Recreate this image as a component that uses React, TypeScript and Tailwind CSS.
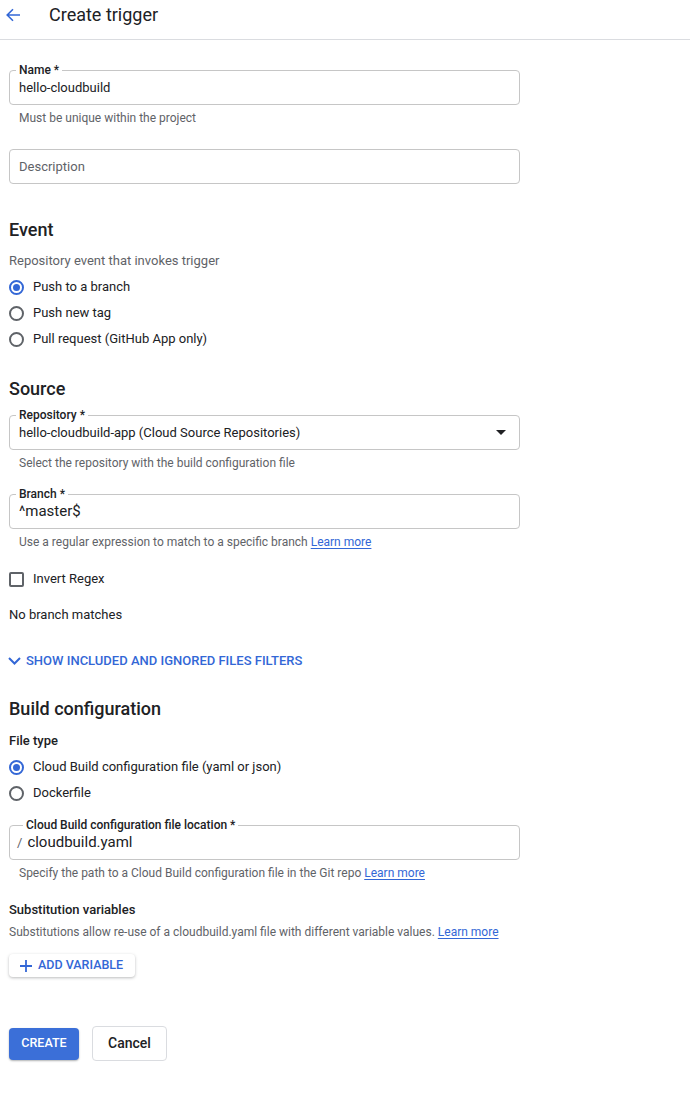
import { ReactNode } from "react";

const blue = "text-[#3367d6]";

function Field({
    label,
    children,
    right,
    labelLeft = "left-[6px]",
    padLeft = "pl-[9px]",
}: {
    label?: string;
    children: ReactNode;
    right?: ReactNode;
    labelLeft?: string;
    padLeft?: string;
}) {
    return (
        <div className={"relative w-[511px] h-[35px] border border-[#c6c6c6] rounded-[4px] flex items-center pr-[12px] " + padLeft}>
            {label && (
                <span className={"absolute top-[-8px] px-[3px] bg-white text-[12px] leading-[14px] font-medium text-[#202124] " + labelLeft}>
                    {label}
                </span>
            )}
            <div className="flex-1 flex items-center">{children}</div>
            {right}
        </div>
    );
}

function Helper({ children }: { children: ReactNode }) {
    return <p className="pl-[10px] mt-[5px] text-[12px] leading-[16px] text-[#5f6368]">{children}</p>;
}

function LearnMore() {
    return <a href="#" className="text-[#3367d6] underline underline-offset-2">Learn more</a>;
}

function Radio({ checked, label }: { checked?: boolean; label: string }) {
    return (
        <div className="h-[26px] flex items-center">
            <span
                className={
                    checked
                        ? "w-[15px] h-[15px] rounded-full border-2 border-[#3367d6] flex items-center justify-center"
                        : "w-[15px] h-[15px] rounded-full border-2 border-[#5f6368]"
                }
            >
                {checked && <span className="w-[7px] h-[7px] rounded-full bg-[#3367d6]" />}
            </span>
            <span className="ml-[9px] text-[13px] text-[#202124]">{label}</span>
        </div>
    );
}

function Heading({ children, className = "" }: { children: ReactNode; className?: string }) {
    return <h2 className={"text-[18px] leading-[24px] font-medium text-[#202124] " + className}>{children}</h2>;
}

export default function App() {
    return (
        <div className="w-[690px] min-h-[1110px] bg-white font-['Roboto',sans-serif] text-[#202124]">
            <header className="h-[40px] border-b border-[#dadce0] flex items-center">
                <svg className="ml-[5px] mt-[-9px]" width="16" height="16" viewBox="0 0 16 16">
                    <path d="M15 8H2.5M8 2.2L2.2 8L8 13.8" fill="none" stroke="#3367d6" strokeWidth="1.6" />
                </svg>
                <h1 className="ml-[28px] mt-[-9px] text-[18px] leading-[24px] text-[#202124]">Create trigger</h1>
            </header>

            <main className="pl-[9px]">
                <div className="pt-[30px]">
                    <Field label="Name *">
                        <span className="text-[13px]">hello-cloudbuild</span>
                    </Field>
                    <Helper>Must be unique within the project</Helper>
                </div>

                <div className="mt-[23px]">
                    <Field>
                        <span className="text-[13px] text-[#5f6368]">Description</span>
                    </Field>
                </div>

                <Heading className="mt-[34px]">Event</Heading>
                <p className="mt-[11px] text-[13px] leading-[16px] text-[#5f6368]">Repository event that invokes trigger</p>
                <div className="mt-[5px]">
                    <Radio checked label="Push to a branch" />
                    <Radio label="Push new tag" />
                    <Radio label="Pull request (GitHub App only)" />
                </div>

                <Heading className="mt-[25px]">Source</Heading>
                <div className="mt-[14px]">
                    <Field
                        label="Repository *"
                        right={
                            <svg width="10" height="5" viewBox="0 0 10 5" className="mr-[1px]">
                                <path d="M0 0h10L5 5z" fill="#202124" />
                            </svg>
                        }
                    >
                        <span className="text-[13px]">hello-cloudbuild-app (Cloud Source Repositories)</span>
                    </Field>
                    <Helper>Select the repository with the build configuration file</Helper>
                </div>

                <div className="mt-[23px]">
                    <Field label="Branch *">
                        <span className="text-[15px]">^master$</span>
                    </Field>
                    <Helper>
                        Use a regular expression to match to a specific branch <LearnMore />
                    </Helper>
                </div>

                <div className="mt-[16px] h-[26px] flex items-center">
                    <span className="w-[15px] h-[15px] rounded-[2px] border-2 border-[#5f6368]" />
                    <span className="ml-[9px] text-[13px]">Invert Regex</span>
                </div>

                <p className="mt-[15px] text-[13px] leading-[16px]">No branch matches</p>

                <button className={"mt-[30px] flex items-center text-[13px] leading-[16px] font-medium " + blue}>
                    <svg width="13" height="8" viewBox="0 0 13 8" className="mr-[5px] ml-[-1px]">
                        <path d="M1 1l5.5 5.5L12 1" fill="none" stroke="#3367d6" strokeWidth="2" />
                    </svg>
                    SHOW INCLUDED AND IGNORED FILES FILTERS
                </button>

                <Heading className="mt-[28px]">Build configuration</Heading>
                <p className="mt-[12px] text-[13px] leading-[16px] font-medium">File type</p>
                <div className="mt-[5px]">
                    <Radio checked label="Cloud Build configuration file (yaml or json)" />
                    <Radio label="Dockerfile" />
                </div>

                <div className="mt-[19px]">
                    <Field label="Cloud Build configuration file location *" labelLeft="left-[13px]" padLeft="pl-[7px]">
                        <span className="text-[13px] text-[#5f6368] mr-[5px]">/</span>
                        <span className="text-[15px]">cloudbuild.yaml</span>
                    </Field>
                    <Helper>
                        Specify the path to a Cloud Build configuration file in the Git repo <LearnMore />
                    </Helper>
                </div>

                <p className="mt-[21px] text-[13px] leading-[16px] font-medium">Substitution variables</p>
                <p className="mt-[6px] text-[12px] leading-[16px] text-[#5f6368]">
                    Substitutions allow re-use of a cloudbuild.yaml file with different variable values. <LearnMore />
                </p>

                <button
                    className={
                        "mt-[14px] h-[23px] pl-[11px] pr-[12px] flex items-center rounded-[4px] bg-white shadow-[0_1px_3px_rgba(60,64,67,0.35)] text-[12.5px] font-medium " +
                        blue
                    }
                >
                    <svg width="12" height="12" viewBox="0 0 12 12" className="mr-[6px]">
                        <path d="M6 0v12M0 6h12" stroke="#3367d6" strokeWidth="1.8" />
                    </svg>
                    ADD VARIABLE
                </button>

                <div className="mt-[49px] flex items-center gap-[13px]">
                    <button className="w-[70px] h-[32px] rounded-[4px] bg-[#3b6fd8] text-white text-[12.5px] font-medium shadow-[0_1px_2px_rgba(60,64,67,0.4)]">
                        CREATE
                    </button>
                    <button className="w-[75px] h-[35px] rounded-[4px] border border-[#dadce0] bg-white text-[14px] font-medium text-[#202124]">
                        Cancel
                    </button>
                </div>
            </main>
        </div>
    );
}
